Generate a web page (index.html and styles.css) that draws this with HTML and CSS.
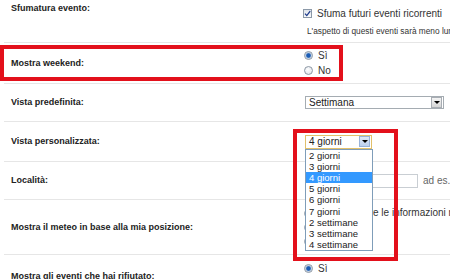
FILE: index.html
```html
<!DOCTYPE html>
<html lang="it">
<head>
<meta charset="UTF-8">
<title>Impostazioni calendario</title>
<link rel="stylesheet" href="styles.css">
</head>
<body>
<div id="settings">
    <div class="row row-fade">
        <div class="label">Sfumatura evento:</div>
        <div class="value">
            <div class="option">
                <span class="check">
                    <svg width="9" height="9" viewBox="0 0 9 9"><path d="M2 4.6 L3.8 6.6 L7.2 2.2" fill="none" stroke="#1d3a8c" stroke-width="1.3"/></svg>
                </span>
                Sfuma futuri eventi ricorrenti
            </div>
            <div class="hint">L'aspetto di questi eventi sarà meno luminoso.</div>
        </div>
    </div>
    <div class="row row-weekend">
        <div class="label">Mostra weekend:</div>
        <div class="value">
            <div class="option"><span class="radio on"></span>Sì</div>
            <div class="option"><span class="radio"></span>No</div>
        </div>
    </div>
    <div class="row row-view">
        <div class="label">Vista predefinita:</div>
        <div class="value">
            <div class="select select-wide">
                <span class="select-text">Settimana</span>
                <span class="select-btn"><i class="arrow"></i></span>
            </div>
        </div>
    </div>
    <div class="row row-custom">
        <div class="label">Vista personalizzata:</div>
        <div class="value">
            <div class="select select-small focused">
                <span class="select-text">4 giorni</span>
                <span class="select-btn"><i class="arrow"></i></span>
                <ul class="dropdown">
                    <li>2 giorni</li>
                    <li>3 giorni</li>
                    <li class="selected">4 giorni</li>
                    <li>5 giorni</li>
                    <li>6 giorni</li>
                    <li>7 giorni</li>
                    <li>2 settimane</li>
                    <li>3 settimane</li>
                    <li>4 settimane</li>
                </ul>
            </div>
        </div>
    </div>
    <div class="row row-place">
        <div class="label">Località:</div>
        <div class="value place">
            <span class="text-input"></span>
            <span class="example">ad es., Roma</span>
        </div>
    </div>
    <div class="row row-weather">
        <div class="label">Mostra il meteo in base alla mia posizione:</div>
        <div class="value tight">
            <div class="option"><span class="radio on"></span>Non mostrare le informazioni meteo</div>
            <div class="option"><span class="radio"></span>°C</div>
            <div class="option"><span class="radio"></span>°F</div>
        </div>
    </div>
    <div class="row row-declined">
        <div class="label">Mostra gli eventi che hai rifiutato:</div>
        <div class="value">
            <div class="option"><span class="radio on"></span>Sì</div>
            <div class="option"><span class="radio"></span>No</div>
        </div>
    </div>

    <div class="mark mark-weekend"></div>
    <div class="mark mark-custom"></div>
</div>
</body>
</html>
```

FILE: styles.css
```css
body {
    margin: 0;
    background-color: #fff;
    font-family: "Liberation Sans", Arial, sans-serif;
    font-size: 10px;
    color: #333;
    overflow: hidden;
}
#settings {
    position: relative;
    width: 450px;
}
.row {
    display: flex;
    align-items: center;
    margin-left: 4px;
    border-bottom: 1px solid #e6e6e6;
    white-space: nowrap;
}
.row-fade {
    height: 42px;
    align-items: flex-start;
}
.row-weekend { height: 40px; }
.row-view { height: 37px; }
.row-custom { height: 39px; }
.row-place { height: 37px; }
.row-weather { height: 54px; }
.row-declined { height: 42px; border-bottom: none; }
.label {
    flex-shrink: 0;
    width: 292px;
    padding-left: 7px;
    font-size: 9px;
    font-weight: bold;
    color: #222;
    line-height: 11px;
}
.row-fade .label {
    padding-top: 3px;
}
.row-fade .value {
    padding-top: 6px;
}
.option {
    display: flex;
    align-items: center;
    line-height: 15px;
}
.tight .option {
    line-height: 14px;
}
.check {
    width: 7px;
    height: 7px;
    border: 1px solid #8c99a8;
    background: linear-gradient(#dfe4ea, #fafbfc);
    margin-right: 5px;
    display: flex;
}
.check svg {
    margin: -1px;
}
.radio {
    width: 7px;
    height: 7px;
    border: 1px solid #8c97a4;
    border-radius: 50%;
    background: radial-gradient(circle at 40% 40%, #fff, #d9dee5);
    margin: 0 5px 0 1px;
}
.radio.on {
    background: radial-gradient(circle, #1b5db5 0, #1b5db5 1.8px, #9fb8d8 2.6px, #eef2f6 3.6px);
}
.hint {
    font-size: 8.3px;
    color: #333;
    margin: 5px 0 0 4px;
    line-height: 11px;
}
.select {
    position: relative;
    display: flex;
    align-items: center;
    margin-left: 2px;
    border: 1px solid #a5acb2;
    background-color: #fff;
    color: #222;
}
.select-wide {
    width: 137px;
    height: 11px;
}
.select-small {
    width: 65px;
    height: 12px;
}
.select.focused {
    border-color: #e2c06a;
}
.select-text {
    flex: 1;
    padding-left: 3px;
    line-height: 11px;
}
.select-btn {
    width: 9px;
    height: 9px;
    margin-right: 1px;
    border: 1px solid #a8adb3;
    background: linear-gradient(#f4f4f4, #d6d6d6);
    display: flex;
    align-items: center;
    justify-content: center;
}
.focused .select-btn {
    border-color: #98b3d9;
    background: linear-gradient(#dfe9f7, #bcd0ee);
}
.arrow {
    width: 0;
    height: 0;
    border-left: 3px solid transparent;
    border-right: 3px solid transparent;
    border-top: 3px solid #000;
}
.dropdown {
    position: absolute;
    top: 13px;
    left: -1px;
    width: 66px;
    margin: 0;
    padding: 0;
    list-style: none;
    border: 1px solid #7f9db9;
    background-color: #fff;
    z-index: 2;
}
.dropdown li {
    line-height: 11.2px;
    padding-left: 3px;
    font-size: 9.5px;
    color: #222;
}
.dropdown li.selected {
    background-color: #3399ff;
    color: #fff;
}
.place {
    display: flex;
    align-items: center;
}
.text-input {
    width: 111px;
    height: 12px;
    margin-left: 2px;
    border: 1px solid #c9ced3;
}
.example {
    margin-left: 5px;
    color: #666;
}
.mark {
    position: absolute;
    border: 4px solid #e3101b;
    z-index: 3;
}
.mark-weekend {
    left: 0;
    top: 45px;
    width: 335px;
    height: 28px;
}
.mark-custom {
    left: 293px;
    top: 129px;
    width: 97px;
    height: 124px;
}
```
